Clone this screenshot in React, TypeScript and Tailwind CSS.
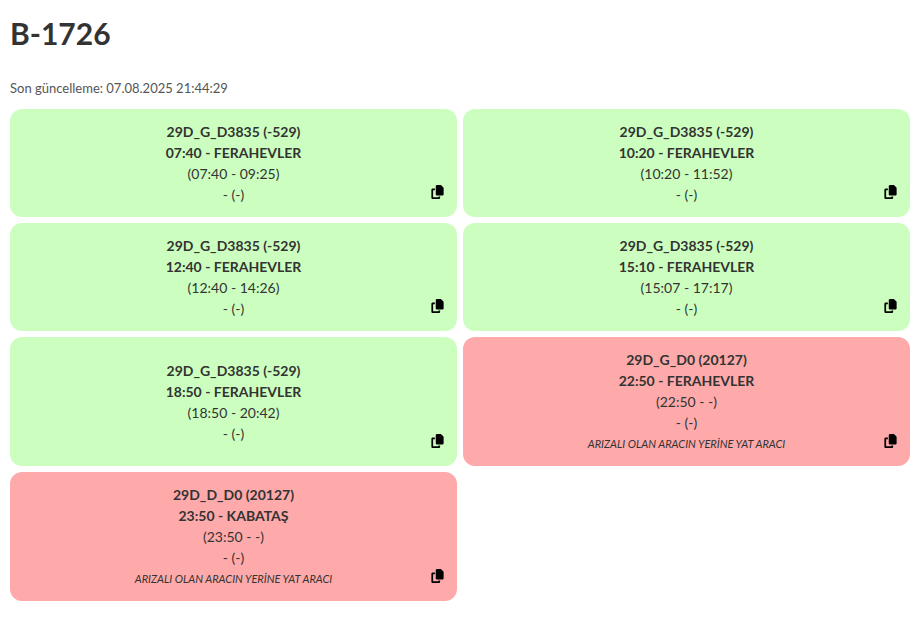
import { FaCopy } from 'react-icons/fa6'

interface Trip {
  code: string
  title: string
  range: string
  note?: string
  faulty?: boolean
}

const TRIPS: Trip[] = [
  { code: '29D_G_D3835 (-529)', title: '07:40 - FERAHEVLER', range: '(07:40 - 09:25)' },
  { code: '29D_G_D3835 (-529)', title: '10:20 - FERAHEVLER', range: '(10:20 - 11:52)' },
  { code: '29D_G_D3835 (-529)', title: '12:40 - FERAHEVLER', range: '(12:40 - 14:26)' },
  { code: '29D_G_D3835 (-529)', title: '15:10 - FERAHEVLER', range: '(15:07 - 17:17)' },
  { code: '29D_G_D3835 (-529)', title: '18:50 - FERAHEVLER', range: '(18:50 - 20:42)' },
  {
    code: '29D_G_D0 (20127)',
    title: '22:50 - FERAHEVLER',
    range: '(22:50 - -)',
    note: 'ARIZALI OLAN ARACIN YERİNE YAT ARACI',
    faulty: true,
  },
  {
    code: '29D_D_D0 (20127)',
    title: '23:50 - KABATAŞ',
    range: '(23:50 - -)',
    note: 'ARIZALI OLAN ARACIN YERİNE YAT ARACI',
    faulty: true,
  },
]

function TripCard({ trip }: { trip: Trip }) {
  return (
    <div
      className={`relative flex flex-col justify-center rounded-xl py-3 px-4 text-center text-[14px] leading-[21px] ${
        trip.faulty ? 'bg-[#ffaaaa]' : 'bg-[#ccffbf]'
      }`}
    >
      <div className="font-bold">{trip.code}</div>
      <div className="font-bold">{trip.title}</div>
      <div>{trip.range}</div>
      <div>- (-)</div>
      {trip.note && <div className="text-[11px] italic">{trip.note}</div>}
      <FaCopy className="absolute right-[13px] bottom-[18px] w-[13px] h-[14px] text-black" />
    </div>
  )
}

export default function App() {
  return (
    <div className="min-h-[627px] bg-white px-2.5 text-[#333] font-['Lato','Liberation_Sans',sans-serif]">
      <h1 className="pt-[13px] text-[30px] leading-[40px] font-bold">B-1726</h1>
      <p className="mt-[25px] mb-[11px] text-[13px] leading-[20px] text-[#555]">
        Son güncelleme: 07.08.2025 21:44:29
      </p>
      <div className="grid grid-cols-2 gap-1.5 w-[900px]">
        {TRIPS.map((t, i) => (
          <TripCard key={i} trip={t} />
        ))}
      </div>
    </div>
  )
}
